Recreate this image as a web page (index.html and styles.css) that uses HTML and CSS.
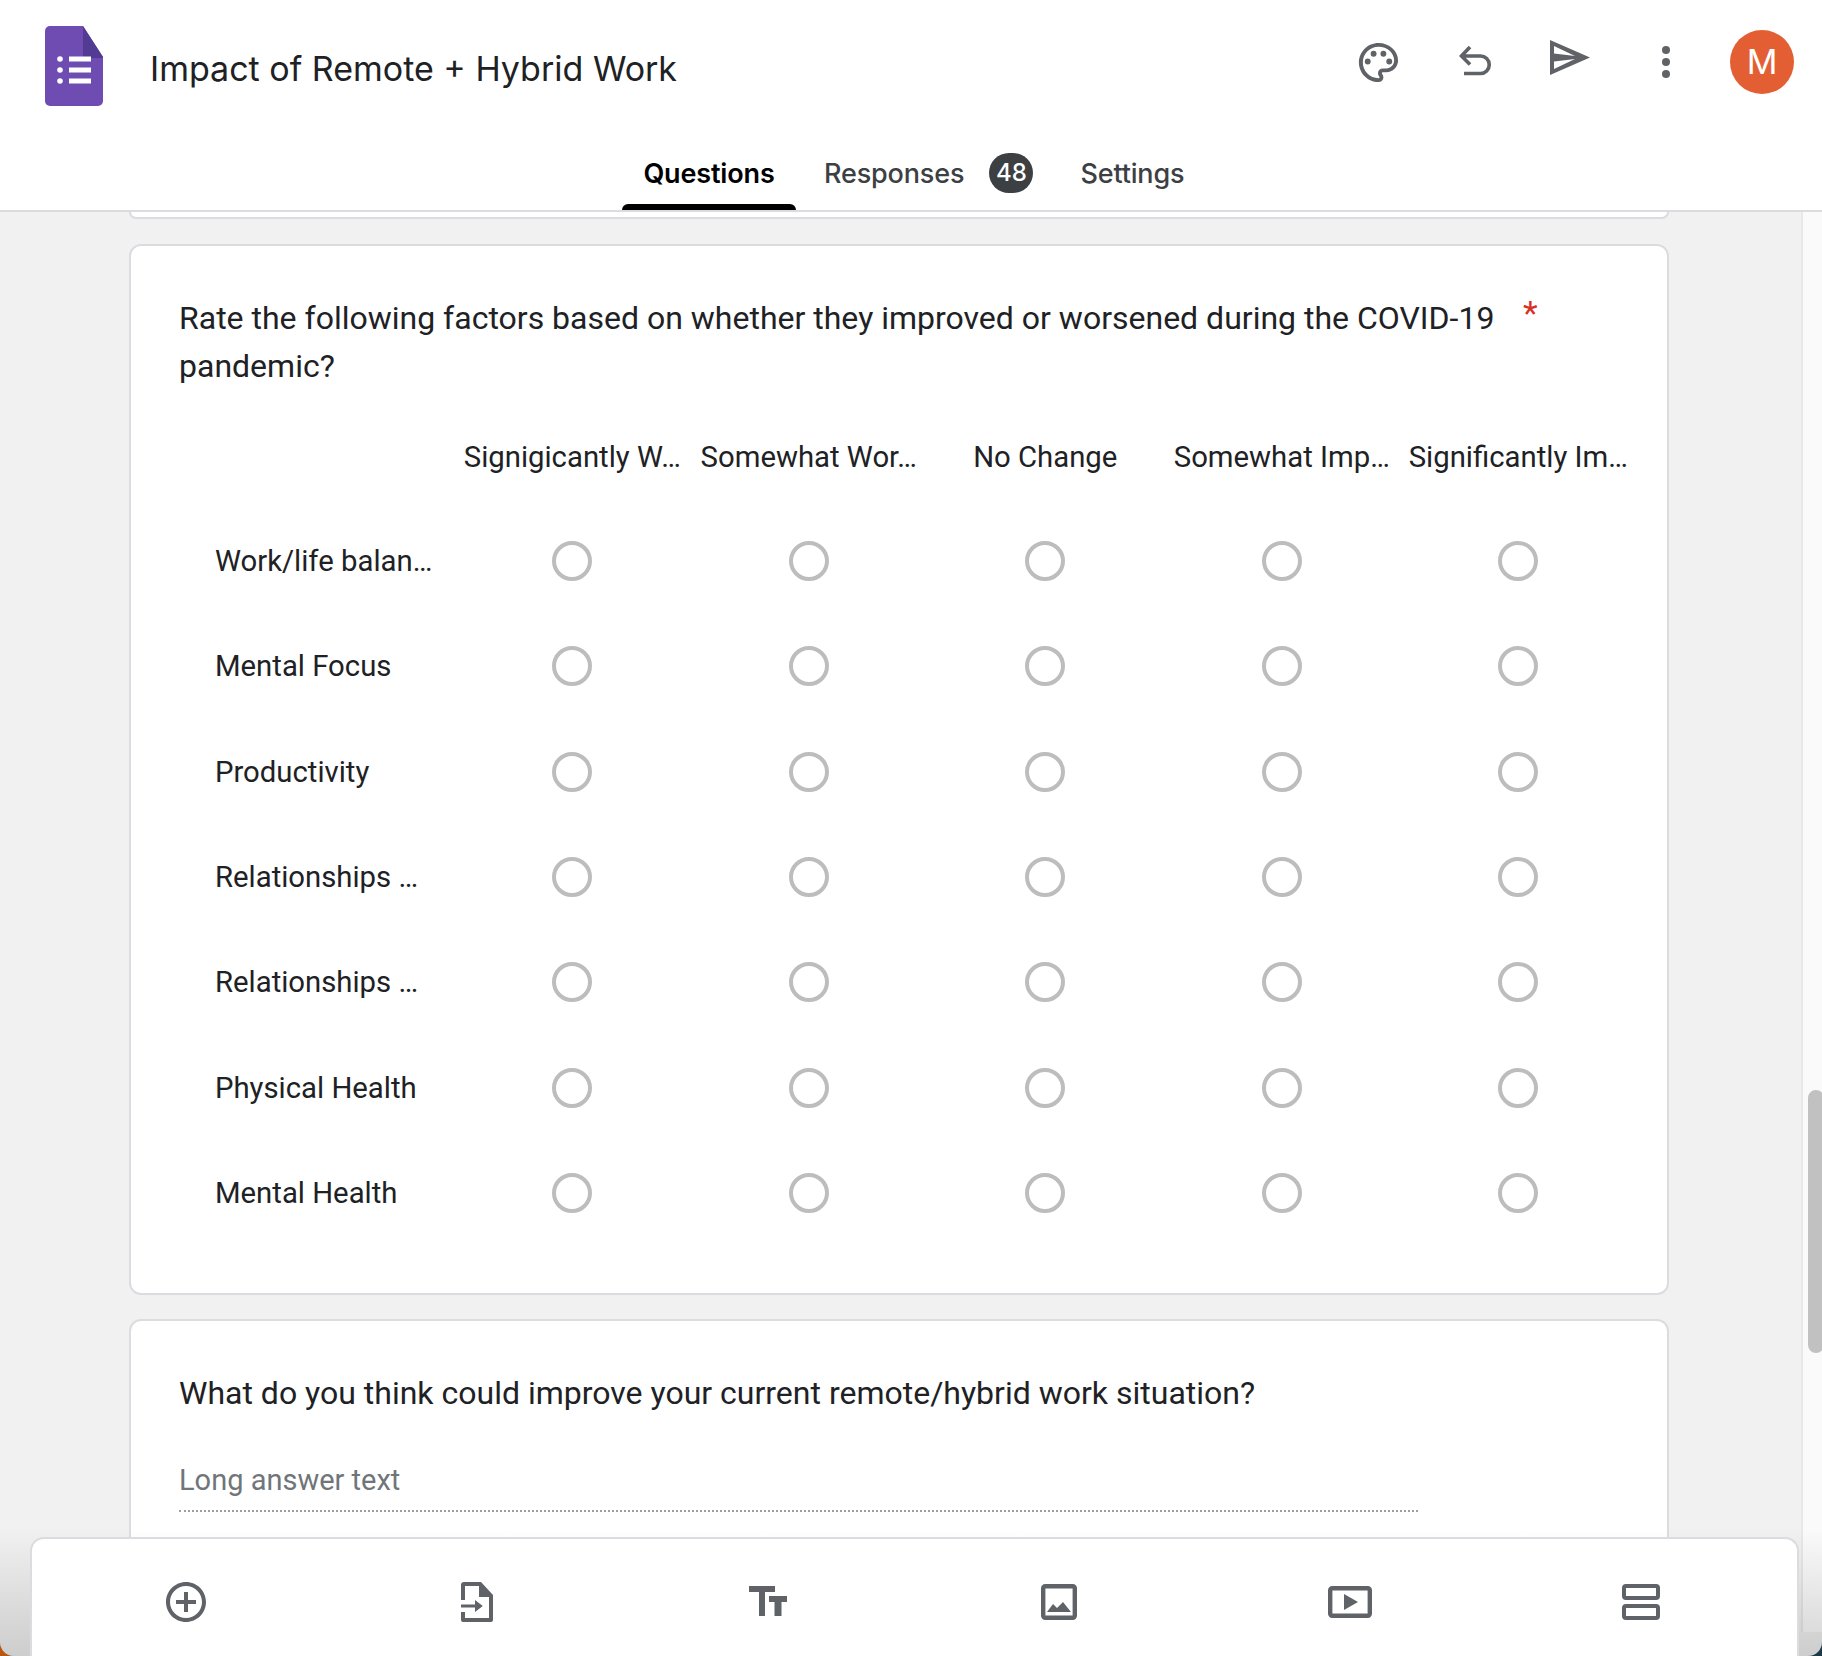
FILE: index.html
```html
<!DOCTYPE html>
<html lang="en">
<head>
<meta charset="utf-8">
<title>Impact of Remote + Hybrid Work</title>
<link rel="stylesheet" href="styles.css">
</head>
<body>
<div class="window">
  <header class="header">
    <div class="toprow">
      <svg class="logo" viewBox="0 0 58 80" width="58" height="80">
        <path fill="#6e4cb2" d="M5 0H38L58 31V75a5 5 0 0 1-5 5H5a5 5 0 0 1-5-5V5a5 5 0 0 1 5-5z"/>
        <path fill="#523b93" d="M38 0L58 31V32H38z"/>
        <circle cx="15" cy="33" r="2.8" fill="#fff"/><circle cx="15" cy="44" r="2.8" fill="#fff"/><circle cx="15" cy="55" r="2.8" fill="#fff"/>
        <rect x="24" y="30.5" width="22" height="5" fill="#fff"/><rect x="24" y="41.5" width="22" height="5" fill="#fff"/><rect x="24" y="52.5" width="22" height="5" fill="#fff"/>
      </svg>
      <h1 class="title">Impact of Remote + Hybrid Work</h1>
      <div class="actions">
        <svg class="act act-palette" viewBox="0 0 24 24" width="47" height="47"><path fill="#5f6368" d="M12 22C6.49 22 2 17.51 2 12S6.49 2 12 2s10 4.04 10 9c0 3.31-2.69 6-6 6h-1.77c-.28 0-.5.22-.5.5 0 .12.05.23.13.33.41.47.64 1.06.64 1.67A2.5 2.5 0 0 1 12 22zm0-18c-4.41 0-8 3.59-8 8s3.59 8 8 8c.28 0 .5-.22.5-.5a.54.54 0 0 0-.14-.35c-.41-.46-.63-1.05-.63-1.65a2.5 2.5 0 0 1 2.5-2.5H16c2.21 0 4-1.79 4-4 0-3.86-3.59-7-8-7z"/><circle cx="6.5" cy="11.5" r="1.5" fill="#5f6368"/><circle cx="9.5" cy="7.5" r="1.5" fill="#5f6368"/><circle cx="14.5" cy="7.5" r="1.5" fill="#5f6368"/><circle cx="17.5" cy="11.5" r="1.5" fill="#5f6368"/></svg>
        <svg class="act act-undo" viewBox="0 0 40 40" width="40" height="40"><path fill="none" stroke="#5f6368" stroke-width="3.6" d="M16 7L7.500 16L16 24.500M7.500 16H26.500a8.750 8.750 0 0 1 0 17.500H10"/></svg>
        <svg class="act act-send" viewBox="0 0 40 35" width="40" height="35"><path fill="#5f6368" fill-rule="evenodd" d="M0 0L40 17.500L0 35ZM4 6V13.500L25 16ZM4 29V21.500L25 19Z"/></svg>
        <svg class="act act-more" viewBox="0 0 8 32" width="8" height="32"><circle cx="4" cy="4" r="4" fill="#5f6368"/><circle cx="4" cy="16" r="4" fill="#5f6368"/><circle cx="4" cy="28" r="4" fill="#5f6368"/></svg>
        <div class="avatar">M</div>
      </div>
    </div>
    <nav class="tabs">
      <div class="tab tab-active">Questions</div>
      <div class="tab tab-responses">Responses<span class="badge">48</span></div>
      <div class="tab tab-settings">Settings</div>
    </nav>
  </header>

  <div class="body">
    <main class="main">
      <div class="card-sliver"></div>

      <section class="card">
        <div class="question">
          <p class="question-text">Rate the following factors based on whether they improved or worsened during the COVID-19 pandemic?</p>
          <span class="required">*</span>
        </div>
        <div class="grid">
          <div class="cell-head"></div>
          <div class="col-head">Signigicantly W…</div>
          <div class="col-head">Somewhat Wor…</div>
          <div class="col-head">No Change</div>
          <div class="col-head">Somewhat Imp…</div>
          <div class="col-head">Significantly Im…</div>

          <div class="row-label">Work/life balan…</div>
          <div class="cell"><span class="radio"></span></div><div class="cell"><span class="radio"></span></div><div class="cell"><span class="radio"></span></div><div class="cell"><span class="radio"></span></div><div class="cell"><span class="radio"></span></div>

          <div class="row-label">Mental Focus</div>
          <div class="cell"><span class="radio"></span></div><div class="cell"><span class="radio"></span></div><div class="cell"><span class="radio"></span></div><div class="cell"><span class="radio"></span></div><div class="cell"><span class="radio"></span></div>

          <div class="row-label">Productivity</div>
          <div class="cell"><span class="radio"></span></div><div class="cell"><span class="radio"></span></div><div class="cell"><span class="radio"></span></div><div class="cell"><span class="radio"></span></div><div class="cell"><span class="radio"></span></div>

          <div class="row-label">Relationships …</div>
          <div class="cell"><span class="radio"></span></div><div class="cell"><span class="radio"></span></div><div class="cell"><span class="radio"></span></div><div class="cell"><span class="radio"></span></div><div class="cell"><span class="radio"></span></div>

          <div class="row-label">Relationships …</div>
          <div class="cell"><span class="radio"></span></div><div class="cell"><span class="radio"></span></div><div class="cell"><span class="radio"></span></div><div class="cell"><span class="radio"></span></div><div class="cell"><span class="radio"></span></div>

          <div class="row-label">Physical Health</div>
          <div class="cell"><span class="radio"></span></div><div class="cell"><span class="radio"></span></div><div class="cell"><span class="radio"></span></div><div class="cell"><span class="radio"></span></div><div class="cell"><span class="radio"></span></div>

          <div class="row-label">Mental Health</div>
          <div class="cell"><span class="radio"></span></div><div class="cell"><span class="radio"></span></div><div class="cell"><span class="radio"></span></div><div class="cell"><span class="radio"></span></div><div class="cell"><span class="radio"></span></div>
        </div>
      </section>

      <section class="card card-long">
        <p class="question-text">What do you think could improve your current remote/hybrid work situation?</p>
        <div class="long-answer">Long answer text</div>
      </section>
    </main>
    <aside class="scrolltrack"><div class="scrollthumb"></div></aside>
  </div>

  <div class="dock">
    <svg viewBox="0 0 24 24" width="48" height="48"><path fill="#5f6368" d="M13 7h-2v4H7v2h4v4h2v-4h4v-2h-4V7zm-1-5C6.480 2 2 6.480 2 12s4.480 10 10 10 10-4.480 10-10S17.520 2 12 2zm0 18c-4.410 0-8-3.590-8-8s3.590-8 8-8 8 3.590 8 8-3.590 8-8 8z"/></svg>
    <svg viewBox="0 0 24 24" width="48" height="48"><path fill="#5f6368" d="M5.500 2H14l6 6.500V21a1 1 0 0 1-1 1H5a1 1 0 0 1-1-1v-4h2v3h12V9.500h-5V4H6v7H4V3.500A1.500 1.500 0 0 1 5.500 2z"/><path fill="#5f6368" d="M4 13.200h7V11l3.900 3-3.900 3v-2.200H4z"/></svg>
    <svg viewBox="0 0 48 48" width="48" height="48"><path fill="#5f6368" d="M5 8H31V14H21V38H15V14H5zM25 18H43V24H37.500V38H30.500V24H25z"/></svg>
    <svg viewBox="0 0 48 48" width="48" height="48"><rect x="8.200" y="8.200" width="31.600" height="31.600" rx="2" fill="none" stroke="#5f6368" stroke-width="4.400"/><path fill="#5f6368" d="M12 34L18 26L22 30L28 24L36 34z"/></svg>
    <svg viewBox="0 0 48 48" width="48" height="48"><rect x="4.200" y="10.200" width="39.600" height="27.600" rx="2" fill="none" stroke="#5f6368" stroke-width="4.400"/><path fill="#5f6368" d="M18 16L32 24L18 32z"/></svg>
    <svg viewBox="0 0 48 48" width="48" height="48"><rect x="7" y="8" width="34" height="12" rx="2" fill="none" stroke="#5f6368" stroke-width="4"/><rect x="7" y="28" width="34" height="12" rx="2" fill="none" stroke="#5f6368" stroke-width="4"/></svg>
  </div>
</div>
</body>
</html>
```

FILE: styles.css
```css
* { box-sizing: border-box; }
html, body { margin: 0; padding: 0; }
body {
  width: 1822px;
  height: 1656px;
  overflow: hidden;
  background: linear-gradient(to right, #b9560f 50%, #1d3a48 50%);
  font-family: Roboto, "Liberation Sans", sans-serif;
  color: #202124;
}
.window {
  position: relative;
  width: 1822px;
  height: 1656px;
  overflow: hidden;
  display: flex;
  flex-direction: column;
  background: #f1f1f1;
  border-radius: 0 0 14px 14px;
}
.window::after {
  content: "";
  position: absolute;
  left: 0;
  right: 0;
  bottom: 0;
  height: 128px;
  background: linear-gradient(to bottom, rgba(0,0,0,0), rgba(0,0,0,.15));
}

/* header */
.header {
  flex: none;
  height: 212px;
  background: #fff;
  border-bottom: 2px solid #dadce0;
  display: flex;
  flex-direction: column;
}
.toprow {
  height: 130px;
  display: flex;
  align-items: flex-start;
  padding: 26px 0 0 45px;
}
.logo { flex: none; }
.title {
  margin: 17px 0 0 47px;
  font: 400 34px/52px Inter, Roboto, sans-serif;
  color: #202124;
  white-space: nowrap;
}
.actions {
  margin-left: auto;
  height: 64px;
  margin-top: 4px;
  margin-right: 28px;
  display: flex;
  align-items: center;
}
.act { flex: none; }
.act-palette { margin-right: 52px; }
.act-undo { margin-top: -4px; margin-right: 56px; }
.act-send { margin-top: -9px; margin-right: 72px; }
.act-more { margin-right: 60px; }
.avatar {
  width: 64px;
  height: 64px;
  border-radius: 50%;
  background: #e35f33;
  color: #fff;
  font: 400 34px/64px Inter, Roboto, sans-serif;
  text-align: center;
}
.tabs {
  flex: 1;
  display: flex;
  padding-left: 622px;
  font: 500 27px/1 Inter, Roboto, sans-serif;
  letter-spacing: -.15px;
  color: #3c4043;
}
.tab {
  display: flex;
  align-items: center;
  height: 80px;
  padding-top: 6px;
  white-space: nowrap;
}
.tab-active {
  width: 174px;
  justify-content: center;
  color: #000;
  font-weight: 600;
  position: relative;
}
.tab-active::after {
  content: "";
  position: absolute;
  left: 0;
  right: 0;
  bottom: 0;
  height: 6px;
  background: #000;
  border-radius: 6px 6px 0 0;
}
.tab-responses { margin-left: 28px; }
.tab-settings { margin-left: 47px; }
.badge {
  width: 44px;
  height: 40px;
  margin-left: 25px;
  border-radius: 20px;
  background: #3c4043;
  color: #fff;
  font-size: 24px;
  line-height: 40px;
  text-align: center;
}

/* page */
.body {
  flex: 1;
  min-height: 0;
  display: flex;
}
.main {
  flex: 1;
  min-width: 0;
  padding-left: 129px;
  overflow: hidden;
}
.card-sliver {
  width: 1540px;
  height: 7px;
  background: #fff;
  border: 2px solid #dadce0;
  border-top: 0;
  border-radius: 0 0 12px 12px;
}
.card {
  width: 1540px;
  margin-top: 25px;
  padding: 48px 0 47.500px 48px;
  background: #fff;
  border: 2px solid #dadce0;
  border-radius: 12px;
}
.card-long { margin-top: 24px; height: 400px; }
.question { display: flex; align-items: flex-start; }
.question-text {
  margin: 0;
  width: 1330px;
  font-size: 32px;
  line-height: 48px;
  color: #202124;
}
.required {
  margin-left: 14px;
  color: #d93025;
  font-size: 34px;
  line-height: 38px;
}
.grid {
  margin-top: 15.500px;
  display: grid;
  grid-template-columns: 275px repeat(5, 236.5px);
  grid-template-rows: 103px repeat(7, 105.3px);
  align-items: center;
  font-size: 29.300px;
}
.col-head { text-align: center; white-space: nowrap; }
.row-label { padding-left: 36px; white-space: nowrap; }
.cell { display: flex; justify-content: center; }
.radio {
  width: 40px;
  height: 40px;
  border: 4px solid #bdbdbd;
  border-radius: 50%;
}
.long-answer {
  margin-top: 43px;
  width: 1239px;
  height: 52px;
  font-size: 29px;
  line-height: 40px;
  color: #70757a;
  border-bottom: 2px dotted #9aa0a6;
}

/* scrollbar */
.scrolltrack {
  flex: none;
  width: 21px;
  height: 1420px;
  padding-left: 5px;
  background: #fafafa;
  border-left: 2px solid #e8e8e8;
  overflow: hidden;
}
.scrollthumb {
  width: 16px;
  height: 263px;
  margin-top: 878px;
  background: #c1c1c1;
  border-radius: 8px;
}

/* bottom toolbar, floating over the page */
.dock {
  position: absolute;
  z-index: 2;
  left: 30px;
  right: 23px;
  bottom: 0;
  height: 119px;
  padding: 39px 0 0 130px;
  display: flex;
  gap: 243px;
  align-items: flex-start;
  background: #fff;
  border: 2px solid #dadce0;
  border-bottom: 0;
  border-radius: 14px 14px 0 0;
}
.dock svg { flex: none; }
```
